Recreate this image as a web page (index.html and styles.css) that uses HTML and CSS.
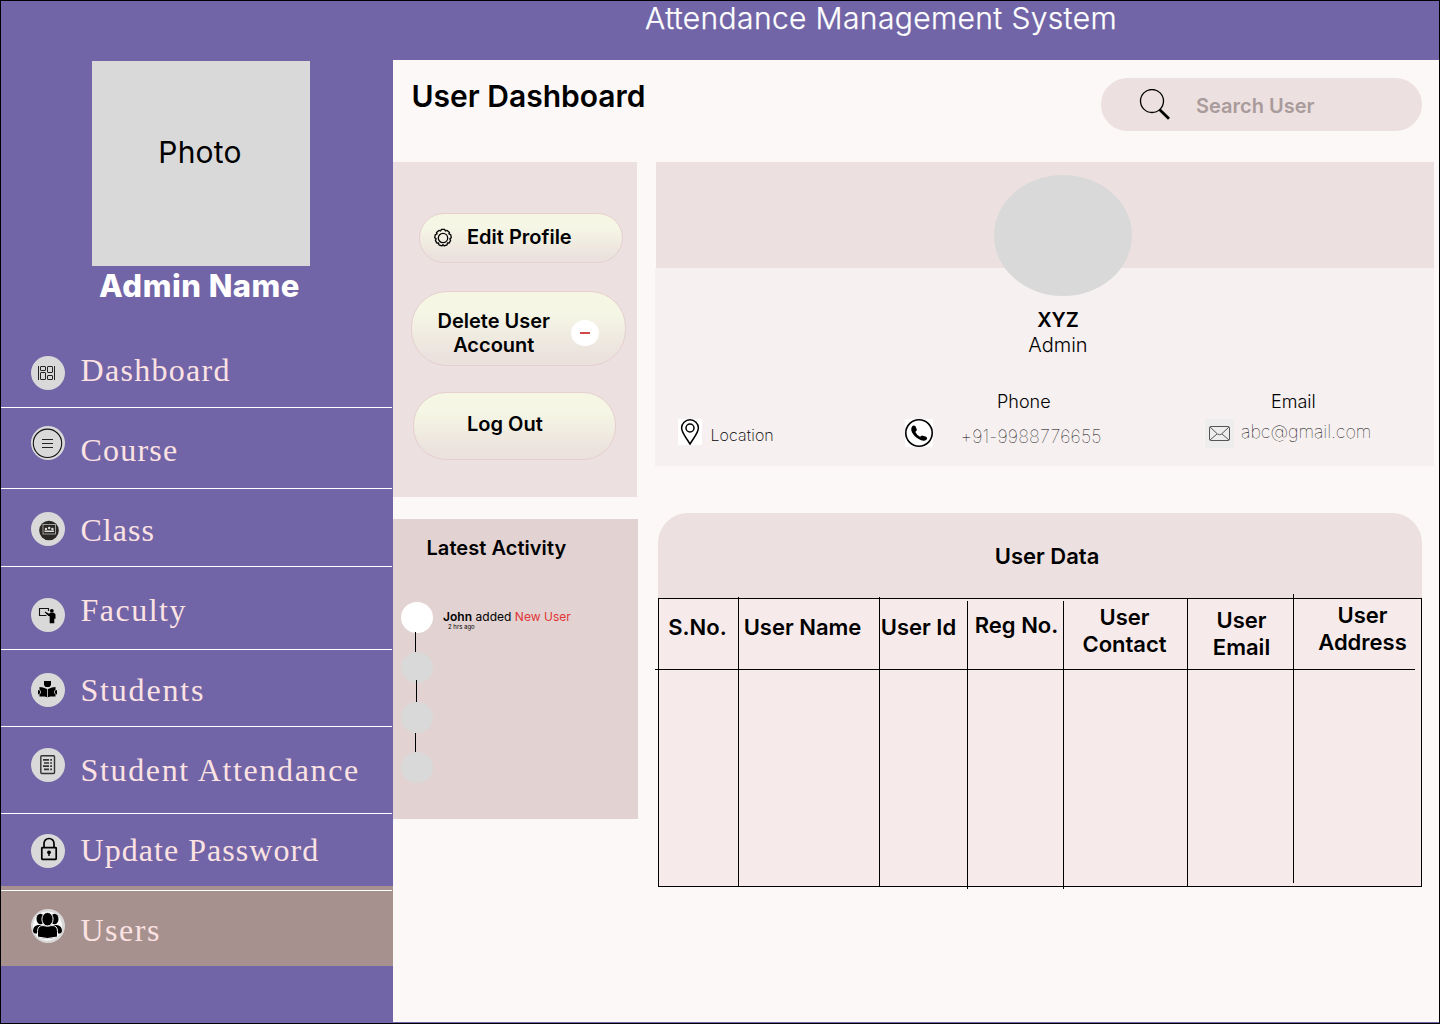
FILE: index.html
```html
<!DOCTYPE html>
<html lang="en">
<head>
<meta charset="utf-8">
<title>Attendance Management System</title>
<link rel="stylesheet" href="styles.css">
</head>
<body>
<div class="page">
  <aside class="sidebar">
    <div class="photo">Photo</div>
    <div class="admin-name">Admin Name</div>
    <ul class="nav">
      <li class="nav-item dashboard">
        <svg class="nav-icon" viewBox="0 0 34 34"><circle cx="17" cy="17" r="17" fill="#d9d9d9"/><g fill="none" stroke="#222" stroke-width="1"><path d="M7.500 10v14M23.500 10v14"/><rect x="9.500" y="10.500" width="5" height="4" rx=".5"/><rect x="9.500" y="16.500" width="5" height="7" rx=".5"/><rect x="16.500" y="10.500" width="5" height="6" rx=".5"/><rect x="16.500" y="19.500" width="5" height="4" rx=".5"/></g></svg>
        <span class="nav-label">Dashboard</span>
      </li>
      <li class="nav-item course">
        <svg class="nav-icon" viewBox="0 0 34 34"><circle cx="17" cy="17" r="17" fill="#d9d9d9"/><circle cx="16.500" cy="17.300" r="14.200" fill="none" stroke="#111" stroke-width="1.100"/><path d="M11 13.500h11M11 17.500h11M11 21.500h11" stroke="#222" stroke-width="1.200"/></svg>
        <span class="nav-label">Course</span>
      </li>
      <li class="nav-item class">
        <svg class="nav-icon" viewBox="0 0 34 34"><circle cx="17" cy="17" r="17" fill="#d9d9d9"/><circle cx="18" cy="18.500" r="9.800" fill="#2b2724"/><rect x="12" y="12.500" width="12.500" height="9.500" fill="none" stroke="#aaa" stroke-width=".9"/><g fill="#ddd"><circle cx="15" cy="17" r="1.200"/><circle cx="18.200" cy="16" r="1.200"/><circle cx="21.400" cy="17" r="1.200"/><path d="M13.500 18.500h9.500v1.500h-9.500z"/></g></svg>
        <span class="nav-label">Class</span>
      </li>
      <li class="nav-item faculty">
        <svg class="nav-icon" viewBox="0 0 34 34"><circle cx="17" cy="17" r="17" fill="#d9d9d9"/><path d="M17.500 13V10.500h-9v7h7" fill="none" stroke="#111" stroke-width="1.100"/><circle cx="20.800" cy="12.800" r="1.900"/><path d="M14 13.500l4 2.300 1.500-1h3.500l1.500 1.500v4.500h-1.200v4.500h-4.600v-7l-1.200-.2-3.700-3.600z"/></svg>
        <span class="nav-label">Faculty</span>
      </li>
      <li class="nav-item students">
        <svg class="nav-icon" viewBox="0 0 34 34"><circle cx="17" cy="17" r="17" fill="#d9d9d9"/><path d="M13 8h7v4l-1.500 2h-4L13 12z"/><path d="M8.500 14l3.500.5 4.500 1.800 4.500-1.800 3.500-.5v2.500l1.500 1v3.500l-1.500 1v1.500h-5l-3 .8-3-.8h-5V22L7 21v-3.500l1.500-1z"/><path d="M16.500 16v8M8.300 16.500q3 2.500.2 5M24.700 16.500q-3 2.500-.2 5" fill="none" stroke="#d9d9d9" stroke-width=".8"/></svg>
        <span class="nav-label">Students</span>
      </li>
      <li class="nav-item attendance">
        <svg class="nav-icon" viewBox="0 0 34 34"><circle cx="17" cy="17" r="17" fill="#d9d9d9"/><rect x="9.800" y="7.700" width="13.700" height="17.800" rx="1" fill="none" stroke="#333" stroke-width="1.400"/><path d="M12 11.800h6M13 15h5M12 18.200h6M13 21.300h5M19.200 11.800h1.800M19.200 15h1.800M19.200 18.200h1.800M19.200 21.300h1.800" stroke="#333" stroke-width="1.700"/></svg>
        <span class="nav-label">Student Attendance</span>
      </li>
      <li class="nav-item password">
        <svg class="nav-icon" viewBox="0 0 34 34"><circle cx="17" cy="17" r="17" fill="#d9d9d9"/><g fill="none" stroke="#000" stroke-width="1.700"><rect x="10.800" y="13.700" width="14.400" height="11.600" rx=".6"/><path d="M13 13.500V9.500a5 5 0 0 1 10 0v4"/></g><circle cx="18" cy="18.300" r="1.900"/><path d="M17.300 19h1.400v3h-1.400z"/></svg>
        <span class="nav-label">Update Password</span>
      </li>
      <li class="nav-item users">
        <svg class="nav-icon" viewBox="0 0 34 34"><circle cx="17" cy="17" r="17" fill="#d9d9d9"/><circle cx="16.500" cy="17" r="14.500" fill="#f8f8f8"/><ellipse cx="9.500" cy="10" rx="4" ry="5.200"/><ellipse cx="23.500" cy="10" rx="4" ry="5.200"/><path d="M4 24.500Q1 23 2.500 19.500 3.500 16 8 16h17q4.500 0 5.500 3.500 1.500 3.500-1.500 5z"/><g stroke="#f8f8f8" stroke-width="1"><ellipse cx="16.500" cy="10.200" rx="5.600" ry="6.800"/><path d="M6.500 28v-5.500q0-6 5.500-6 4.500 1.600 9 0 5.500 0 5.500 6V28q-10 3-20 0z"/></g></svg>
        <span class="nav-label">Users</span>
      </li>
    </ul>
  </aside>

  <div class="content">
    <header class="topbar">Attendance Management System</header>
    <main class="main">
      <div class="main-head">
        <h1 class="title">User Dashboard</h1>
        <div class="search">
          <svg class="search-icon" viewBox="0 0 32 32"><circle cx="13" cy="12" r="11.500" fill="none" stroke="#000" stroke-width="1.300"/><path d="M20.500 20.500l9.500 9.300" stroke="#000" stroke-width="2.800"/></svg>
          <span>Search User</span>
        </div>
      </div>

      <div class="columns">
        <div class="left">
          <section class="actions">
            <div class="btn edit">
              <svg class="gear" viewBox="0 0 20 20" fill="none" stroke="#000" stroke-width="1.300"><circle cx="10" cy="10" r="4.700"/><path stroke-linejoin="round" d="M8.300 1.400h3.400l.7 1.600 1.700-.6 2.400 2-.6 1.600 1.800.6.600 3.100-1.500 1 .8 1.700-1.500 2.700-1.700-.1-.3 1.800-3 1.100-1.100-1.300-1.100 1.300-3-1.100-.3-1.800-1.700.1-1.500-2.700.8-1.700-1.500-1 .6-3.100 1.800-.6-.6-1.600 2.400-2 1.700.6z"/></svg>
              <span>Edit Profile</span>
            </div>
            <div class="btn delete">
              <span>Delete User<br>Account</span>
              <i class="minus"></i>
            </div>
            <div class="btn logout"><span>Log Out</span></div>
          </section>
          <section class="activity">
            <h2>Latest Activity</h2>
            <ul class="timeline">
              <li class="event latest">
                <i class="dot"></i>
                <div class="event-text">
                  <div class="what"><b>John</b> added <em>New User</em></div>
                  <div class="when">2 hrs ago</div>
                </div>
              </li>
              <li class="event second"><i class="dot"></i></li>
              <li class="event third"><i class="dot"></i></li>
              <li class="event"><i class="dot"></i></li>
            </ul>
          </section>
        </div>

        <div class="right">
          <section class="profile">
            <div class="banner"><div class="avatar"></div></div>
            <div class="details">
              <div class="who"><strong>XYZ</strong><span>Admin</span></div>
              <div class="contacts">
                <div class="contact location">
                  <div class="row">
                    <svg class="pin" viewBox="0 0 24 26"><path fill="#fff" d="M0 0h24v26H0z"/><path d="M12 25C8 18.500 3.600 13.500 3.600 9a8.400 8.200 0 0 1 16.800 0c0 4.500-4.400 9.500-8.400 16z" fill="none" stroke="#000" stroke-width="1.500"/><circle cx="12" cy="9" r="4" fill="none" stroke="#000" stroke-width="1.500"/></svg>
                    <span>Location</span>
                  </div>
                </div>
                <div class="contact phone">
                  <div class="label">Phone</div>
                  <div class="row">
                    <svg class="call" viewBox="0 0 28 28"><path fill="#fff" d="M0 0h28v28H0z"/><circle cx="14" cy="14" r="13.200" fill="none" stroke="#000" stroke-width="1.600"/><path d="M7 7.500Q8.500 5.800 10.500 7.300L12 11l-1.700 2q1.700 3.300 4.700 4.800l2-1.400 4.200 1.400q1.800 1.200.3 3-2.500 1.700-6 .2Q8 17.500 6.300 11.500 6 9 7 7.500z"/></svg>
                    <span>+91-9988776655</span>
                  </div>
                </div>
                <div class="contact email">
                  <div class="label">Email</div>
                  <div class="row">
                    <svg class="mail" viewBox="0 0 29 29"><path fill="#ededed" d="M0 0h29v29H0z"/><g fill="none" stroke="#555" stroke-width="1"><rect x="4.500" y="7.500" width="20" height="14" rx="1.300"/><path d="M5 8l7.500 7q2 1.500 4 0L24 8M5 21l7-6M24 21l-7-6"/></g></svg>
                    <span>abc@gmail.com</span>
                  </div>
                </div>
              </div>
            </div>
          </section>

          <section class="data">
            <h2>User Data</h2>
            <div class="table">
              <div class="col sno">S.No.</div>
              <div class="col name">User Name</div>
              <div class="col id">User Id</div>
              <div class="col reg">Reg No.</div>
              <div class="col tel">User<br>Contact</div>
              <div class="col mailcol">User<br>Email</div>
              <div class="col address">User<br>Address</div>
            </div>
          </section>
        </div>
      </div>
    </main>
  </div>
</div>
</body>
</html>
```
FILE: styles.css
```css
* { box-sizing: border-box; }

body {
  margin: 0;
  font-family: Inter, "Liberation Sans", sans-serif;
  color: #000;
}

h1, h2, ul { margin: 0; padding: 0; list-style: none; }
svg { display: block; flex: none; }

.page {
  display: grid;
  grid-template-columns: 392px 1046px;
  width: 1440px;
  height: 1024px;
  border: 1px solid #000;
  background: #7165a7;
  overflow: hidden;
}

/* Sidebar */
.sidebar { padding-top: 60px; }

.photo {
  width: 218px;
  height: 205px;
  margin-left: 91px;
  padding-right: 2px;
  background: #d9d9d9;
  font-size: 30px;
  line-height: 182px;
  letter-spacing: .2px;
  text-align: center;
}

.admin-name {
  height: 61px;
  padding-right: 14px;
  padding-left: 19px;
  color: #fff;
  font-size: 31px;
  font-weight: 800;
  line-height: 39px;
  letter-spacing: .5px;
  text-align: center;
}

.nav-item {
  display: flex;
  position: relative;
  align-items: flex-start;
  gap: 15.5px;
  width: 391px;
  padding-left: 30px;
  border-bottom: 1px solid #fff;
}

.nav-icon { width: 34px; height: 34px; }

.nav-label {
  color: #fce2e2;
  font-family: "Liberation Serif", serif;
  font-size: 32px;
  line-height: 40px;
  white-space: nowrap;
}

.dashboard { height: 81px; }
.dashboard .nav-icon { margin-top: 29px; }
.dashboard .nav-label { margin-top: 23px; letter-spacing: 1.3px; }
.course { height: 81px; }
.course .nav-icon { margin-top: 18px; }
.course .nav-label { margin-top: 22px; letter-spacing: 1.2px; }
.class { height: 78px; }
.class .nav-icon { margin-top: 23px; }
.class .nav-label { margin-top: 21px; letter-spacing: 1px; }
.faculty { height: 83px; }
.faculty .nav-icon { margin-top: 31px; }
.faculty .nav-label { margin-top: 23px; letter-spacing: 1.5px; }
.students { height: 77px; }
.students .nav-icon { margin-top: 23px; }
.students .nav-label { margin-top: 20px; letter-spacing: 1.8px; }
.attendance { height: 87px; }
.attendance .nav-icon { margin-top: 21px; }
.attendance .nav-label { margin-top: 23px; letter-spacing: 1.65px; }
.password { height: 72px; border: 0; }
.password .nav-icon { margin-top: 20px; }
.password .nav-label { margin-top: 16px; letter-spacing: 1.05px; }
.users { width: 392px; height: 80px; border: 0; background: #a6918f; }
.users::before {
  content: "";
  position: absolute;
  top: 4px;
  left: 0;
  width: 391px;
  height: 1px;
  background: #fff;
}
.users .nav-icon { margin-top: 23px; }
.users .nav-label { margin-top: 24px; letter-spacing: 1.5px; }

/* Top bar and page heading */
.topbar {
  height: 59px;
  padding-left: 252px;
  color: #fff;
  font-size: 30px;
  font-weight: 300;
  line-height: 35px;
  letter-spacing: .37px;
  white-space: nowrap;
  -webkit-text-stroke: .25px #fff;
}

.main {
  height: 962px;
  background: #fcf8f7;
}

.main-head {
  display: flex;
  justify-content: space-between;
  height: 102px;
  padding: 18px 17px 0 18.5px;
}

.title {
  font-size: 30px;
  font-weight: 600;
  line-height: 37px;
}

.search {
  display: flex;
  align-items: center;
  gap: 25px;
  width: 321px;
  height: 53px;
  padding-left: 38px;
  border-radius: 27px;
  background: #ede0e0;
  color: #a99b9b;
  font-size: 20px;
  font-weight: 600;
}
.search-icon { width: 32px; height: 32px; }
.search span { padding-top: 2px; }

.columns { display: flex; gap: 17px; }

/* Action buttons */
.left { width: 245px; }

.actions {
  width: 244px;
  height: 335px;
  margin-bottom: 22px;
  padding: 51px 0 0 18px;
  background: #ede0e0;
}

.btn {
  display: flex;
  border: 1px solid #e6cfcf;
  background: linear-gradient(#f5f6e3, #f5f6e5 28%, #ebe1dd 90%);
  font-size: 20px;
  font-weight: 600;
  line-height: 24px;
  white-space: nowrap;
}
.edit {
  width: 204px;
  height: 50px;
  margin-left: 8px;
  padding: 11px 0 0 13px;
  border-radius: 25px;
}
.edit span { margin-left: 14px; }
.gear { width: 20px; height: 20px; margin-top: 3px; }
.delete {
  width: 215px;
  height: 75px;
  margin-top: 28px;
  padding: 17px 0 0 25.5px;
  border-radius: 36px;
  text-align: center;
}
.minus {
  display: flex;
  align-items: center;
  justify-content: center;
  width: 28px;
  height: 26px;
  margin: 11px 0 0 20.5px;
  border-radius: 50%;
  background: #fff;
}
.minus::before {
  content: "";
  width: 10px;
  height: 2px;
  background: #d04a4a;
}
.logout {
  width: 203px;
  height: 68px;
  margin: 26px 0 0 2px;
  padding: 19px 0 0 53px;
  border-radius: 33px;
}

/* Activity timeline */
.activity {
  height: 300px;
  padding-top: 17px;
  background: #e2d2d1;
}
.activity h2 {
  height: 66px;
  padding-left: 33.5px;
  font-size: 20px;
  font-weight: 600;
  line-height: 24px;
  letter-spacing: .05px;
}
.event {
  display: flex;
  position: relative;
  gap: 10px;
  height: 50px;
  padding-left: 8px;
}
.dot {
  width: 32px;
  height: 31px;
  border-radius: 50%;
  background: #d9d9d9;
}
.latest .dot { background: #fff; }
.event:not(:last-child)::after {
  content: "";
  position: absolute;
  top: 30px;
  left: 22px;
  width: 1px;
  height: 20px;
  background: #000;
}
.event.second::after { top: 28px; left: 23px; height: 22px; }
.event.third::after { top: 31px; height: 19px; }
.event-text { padding-top: 8px; white-space: nowrap; }
.what { font-size: 12px; line-height: 14px; letter-spacing: .03px; }
.what b { font-weight: 600; }
.what em { color: #e03535; font-style: normal; }
.when { padding-left: 5px; font-size: 6px; line-height: 6px; }

/* Profile card */
.right { width: 779px; }

.banner {
  height: 106px;
  margin-left: 1px;
  padding: 13px 0 0 338px;
  background: #ede0e0;
}
.avatar {
  position: relative;
  width: 138px;
  height: 121px;
  border-radius: 50%;
  background: #d9d9d9;
}
.details {
  height: 198px;
  padding-top: 40px;
  background: #f6f0f0;
}
.who {
  display: flex;
  flex-direction: column;
  width: 806px;
  font-size: 20px;
  font-weight: 300;
  line-height: 25px;
  text-align: center;
}
.who strong { font-weight: 600; }
.contacts {
  display: flex;
  padding: 33px 0 0 23px;
  white-space: nowrap;
}
.contact { height: 60px; }
.row { display: flex; }
.label {
  height: 28px;
  font-size: 18px;
  font-weight: 300;
  line-height: 22px;
}
.location { width: 227px; padding-top: 28px; }
.location .row { gap: 8.5px; font-size: 16px; font-weight: 200; letter-spacing: .1px; }
.location span { margin-top: 6px; line-height: 20px; }
.pin { width: 24px; height: 26px; }
.phone { width: 300px; }
.phone .label { padding-left: 92px; }
.phone .row { gap: 27.5px; font-size: 18px; font-weight: 100; }
.phone span { margin-top: 7px; line-height: 22px; letter-spacing: .2px; }
.call { width: 28px; height: 28px; }
.email .label { padding-left: 66px; }
.email .row { gap: 7px; font-size: 18px; font-weight: 100; }
.email span { margin-top: 2px; line-height: 22px; letter-spacing: -.05px; }
.mail { width: 29px; height: 29px; }

/* User table */
.data {
  width: 764px;
  margin: 47px 0 0 3px;
}
.data h2 {
  height: 85px;
  padding: 30px 0 0 14px;
  border-radius: 30px 30px 0 0;
  background: #ede0e0;
  font-size: 22px;
  font-weight: 600;
  line-height: 27px;
  text-align: center;
}
.table {
  display: grid;
  position: relative;
  grid-template-columns: 79px 141px 88px 96px 124px 106px 128px;
  height: 289px;
  border: 1px solid #000;
  background: #f7eaea;
}
.table::after {
  content: "";
  position: absolute;
  top: 70px;
  left: -4px;
  width: 760px;
  height: 1px;
  background: #000;
}
.col {
  position: relative;
  font-size: 22px;
  font-weight: 600;
  line-height: 27px;
  text-align: center;
  white-space: nowrap;
}
.col:not(:last-child)::after {
  content: "";
  position: absolute;
  top: -2px;
  right: -1px;
  bottom: 0;
  width: 1px;
  background: #000;
}
.sno { padding: 15px 2px 0 0; }
.name { padding: 15px 12px 0 0; }
.id { padding: 15px 9px 0 0; }
.id.col::after, .reg.col::after { top: 2px; bottom: -3px; }
.reg { padding: 13px 0 0 3px; }
.tel { padding: 5px 1px 0 0; }
.tel.col::after { top: 0; }
.mailcol { padding: 8px 0 0 3px; }
.mailcol.col::after { top: -5px; bottom: 3px; }
.address { padding: 3px 0 0 11px; }
```
